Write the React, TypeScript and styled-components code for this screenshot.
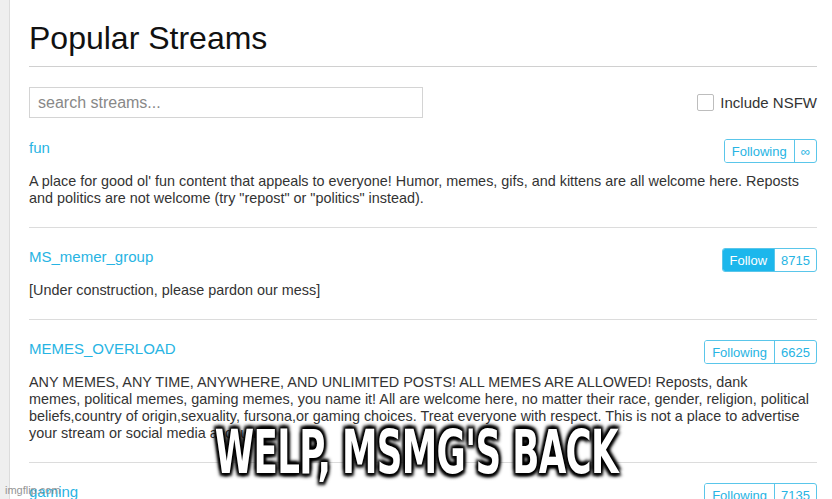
import React from 'react';
import styled, { createGlobalStyle } from 'styled-components';

const GlobalStyle = createGlobalStyle`
  html, body {
    margin: 0;
    padding: 0;
    height: 100%;
    overflow: hidden;
    background: #ffffff;
  }
  body {
    font-family: 'Liberation Sans', Arial, sans-serif;
    color: #333333;
  }
`;

interface Stream {
  name: string;
  description: string;
  following: boolean;
  count: string;
}

// line breaks kept as they appear on the captured page
const streams: Stream[] = [
  {
    name: 'fun',
    description:
      'A place for good ol\' fun content that appeals to everyone! Humor, memes, gifs, and kittens are all welcome here. Reposts\nand politics are not welcome (try "repost" or "politics" instead).',
    following: true,
    count: '∞',
  },
  {
    name: 'MS_memer_group',
    description: '[Under construction, please pardon our mess]',
    following: false,
    count: '8715',
  },
  {
    name: 'MEMES_OVERLOAD',
    description:
      'ANY MEMES, ANY TIME, ANYWHERE, AND UNLIMITED POSTS! ALL MEMES ARE ALLOWED! Reposts, dank\nmemes, political memes, gaming memes, you name it! All are welcome here, no matter their race, gender, religion, political\nbeliefs,country of origin,sexuality, fursona,or gaming choices. Treat everyone with respect. This is not a place to advertise\nyour stream or social media accounts.',
    following: true,
    count: '6625',
  },
  {
    name: 'gaming',
    description: 'Video game memes, gaming news, and everything else about games.',
    following: true,
    count: '7135',
  },
];

function StreamRow({ stream }: { stream: Stream }) {
  return (
    <Row>
      <RowHeader>
        <StreamName href="#">{stream.name}</StreamName>
        <FollowGroup>
          <FollowButton $active={!stream.following}>
            {stream.following ? 'Following' : 'Follow'}
          </FollowButton>
          <FollowCount>{stream.count}</FollowCount>
        </FollowGroup>
      </RowHeader>
      <Description>{stream.description}</Description>
    </Row>
  );
}

export default function App() {
  return (
    <>
      <GlobalStyle />
      <Page>
        <SideStrip />
        <Main>
          <Title>Popular Streams</Title>
          <Divider />
          <SearchBar>
            <SearchInput placeholder="search streams..." />
            <NsfwLabel>
              <CheckBox />
              Include NSFW
            </NsfwLabel>
          </SearchBar>
          {streams.map((s) => (
            <StreamRow key={s.name} stream={s} />
          ))}
        </Main>
        <Caption>
          <CaptionText>WELP, MSMG'S BACK</CaptionText>
        </Caption>
        <Watermark>imgflip.com</Watermark>
      </Page>
    </>
  );
}

const Page = styled.div`
  position: relative;
  display: flex;
  width: 832px;
  height: 499px;
  overflow: hidden;
`;

const SideStrip = styled.div`
  flex: 0 0 9px;
  background: #efefef;
  border-right: 1px solid #dcdcdc;
`;

const Main = styled.div`
  flex: 1;
  padding: 0 15px 0 19px;
`;

const Title = styled.h1`
  margin: 0;
  padding-top: 19px;
  font-size: 32px;
  font-weight: normal;
  line-height: 38px;
  color: #111111;
`;

const Divider = styled.hr`
  margin: 9px 0 0;
  border: none;
  border-top: 1px solid #d0d0d0;
`;

const SearchBar = styled.div`
  display: flex;
  align-items: center;
  justify-content: space-between;
  margin: 20px 0 1px;
`;

const SearchInput = styled.input`
  box-sizing: border-box;
  width: 394px;
  height: 31px;
  padding: 0 8px;
  border: 1px solid #d4d4d4;
  font-family: 'Liberation Sans', Arial, sans-serif;
  font-size: 16px;
  color: #333;
  outline: none;

  &::placeholder {
    color: #888888;
  }
`;

const NsfwLabel = styled.label`
  display: flex;
  align-items: center;
  gap: 6px;
  font-size: 15px;
  color: #333333;
`;

const CheckBox = styled.span`
  box-sizing: border-box;
  width: 17px;
  height: 17px;
  border: 1px solid #bdbdbd;
  border-radius: 2px;
  background: #fff;
`;

const Row = styled.div`
  padding: 20px 0;
  border-bottom: 1px solid #dcdcdc;
`;

const RowHeader = styled.div`
  display: flex;
  align-items: flex-start;
  justify-content: space-between;
`;

const StreamName = styled.a`
  font-size: 15px;
  line-height: 17px;
  color: #27b4e3;
  text-decoration: none;
`;

const FollowGroup = styled.div`
  box-sizing: border-box;
  display: flex;
  height: 24px;
  border: 1px solid #5ac6ea;
  border-radius: 3px;
  overflow: hidden;
  font-size: 13px;
`;

const FollowButton = styled.span<{ $active: boolean }>`
  display: flex;
  align-items: center;
  padding: 0 7px;
  color: ${({ $active }) => ($active ? '#ffffff' : '#27b4e3')};
  background: ${({ $active }) => ($active ? '#1cb7ec' : '#ffffff')};
`;

const FollowCount = styled.span`
  display: flex;
  align-items: center;
  padding: 0 6px;
  border-left: 1px solid #5ac6ea;
  color: #27b4e3;
`;

const Description = styled.p`
  margin: 10px 0 0;
  font-size: 14.4px;
  line-height: 17px;
  white-space: pre-line;
  color: #333333;
`;

const Caption = styled.div`
  position: absolute;
  left: 0;
  right: 0;
  top: 417px;
  display: flex;
  justify-content: center;
`;

const CaptionText = styled.span`
  display: inline-block;
  font-family: 'Liberation Sans Narrow', 'DejaVu Sans Condensed', 'Liberation Sans', sans-serif;
  font-weight: bold;
  font-size: 60px;
  line-height: 70px;
  white-space: nowrap;
  color: #ffffff;
  letter-spacing: -1px;
  transform: scaleX(0.66);
  -webkit-text-stroke: 3.5px #ffffff;
  paint-order: stroke fill;
  text-shadow:
    0 0 3px #000,
    0 0 4px #000,
    3px 3px 4px #000,
    -3px -3px 4px #000,
    3px -3px 4px #000,
    -3px 3px 4px #000;
`;

const Watermark = styled.div`
  position: absolute;
  left: 5px;
  bottom: 3px;
  font-size: 11px;
  color: #8a8a8a;
  opacity: 0.9;
`;
